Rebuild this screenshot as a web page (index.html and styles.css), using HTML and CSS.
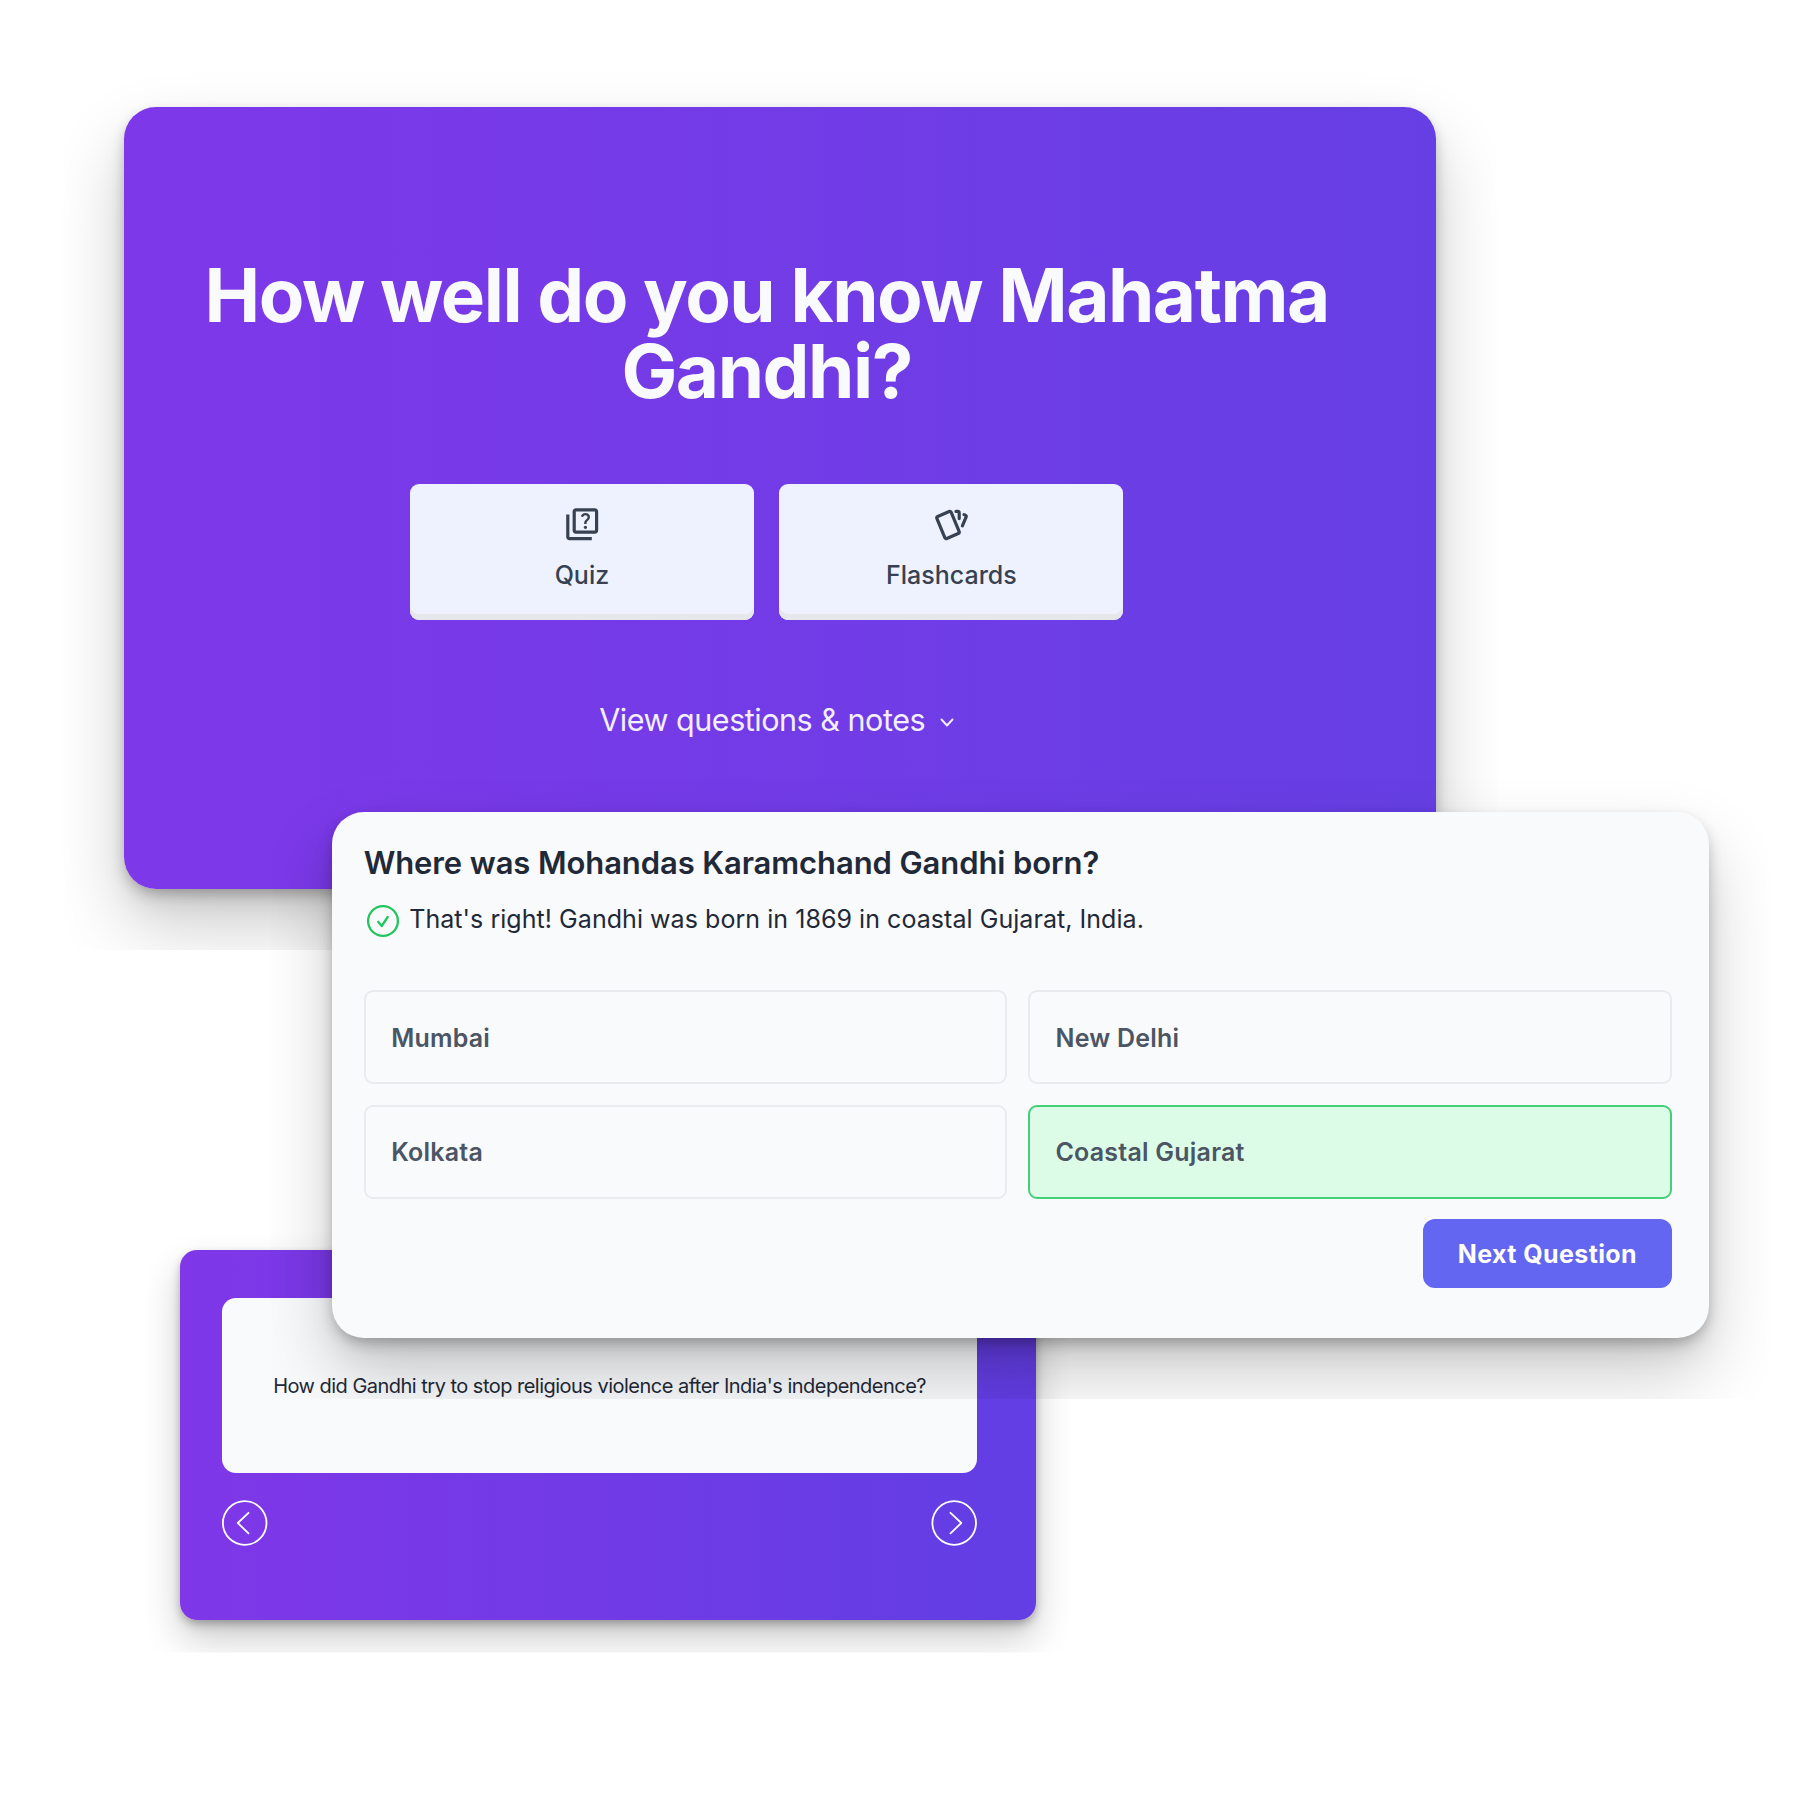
FILE: index.html
```html
<!DOCTYPE html>
<html lang="en">
<head>
<meta charset="utf-8">
<title>Mahatma Gandhi quiz</title>
<link rel="stylesheet" href="styles.css">
</head>
<body>
<main class="canvas">
  <section class="panel intro">
    <h1 class="intro-title">How well do you know Mahatma<br>Gandhi?</h1>
    <div class="modes">
      <button class="mode">
        <svg class="mode-icon" viewBox="0 0 24 24" fill="currentColor"><path d="M4 6H2v14c0 1.100.9 2 2 2h14v-2H4V6zm16-4H8c-1.100 0-2 .9-2 2v12c0 1.100.9 2 2 2h12c1.100 0 2-.9 2-2V4c0-1.100-.9-2-2-2zm0 14H8V4h12v12zm-6.490-5.840c.41-.73 1.180-1.160 1.630-1.800.48-.68.21-1.940-1.140-1.940-.88 0-1.320.67-1.500 1.230l-1.370-.57C11.510 5.960 12.520 5 13.990 5c1.230 0 2.080.56 2.510 1.260.37.6.58 1.730.01 2.570-.63.93-1.230 1.210-1.560 1.810-.13.24-.18.4-.18 1.180h-1.520c.01-.41-.06-1.080.26-1.660zm-.56 3.790c0-.59.47-1.040 1.050-1.040.59 0 1.040.45 1.040 1.040 0 .58-.44 1.050-1.040 1.050-.58 0-1.050-.47-1.050-1.050z"/></svg>
        <span class="mode-label">Quiz</span>
      </button>
      <button class="mode">
        <svg class="mode-icon" viewBox="0 0 24 24" fill="none" stroke="currentColor" stroke-width="2" stroke-linecap="round" stroke-linejoin="round"><path d="M3.604 7.197l7.138-3.109a.96.96 0 0 1 1.270.527l4.924 11.902a1 1 0 0 1-.514 1.304l-7.137 3.109a.96.96 0 0 1-1.271-.527l-4.924-11.903a1 1 0 0 1 .514-1.304z"/><path d="M15 4h1a1 1 0 0 1 1 1v3.500"/><path d="M20 6c.264.112.52.217.768.315a1 1 0 0 1 .53 1.311l-2.298 5.374"/></svg>
        <span class="mode-label">Flashcards</span>
      </button>
    </div>
    <div class="view-notes">
      <span>View questions &amp; notes</span>
      <svg class="chevron" viewBox="0 0 14 10" fill="none" stroke="currentColor" stroke-width="1.900" stroke-linecap="round" stroke-linejoin="round"><path d="M1.500 1.500 7 7.500l5.500-6"/></svg>
    </div>
  </section>

  <section class="panel flashcard">
    <div class="flash-face"><p class="flash-text">How did Gandhi try to stop religious violence after India's independence?</p></div>
    <div class="flash-nav">
      <svg class="nav-icon" viewBox="0 0 46 46" fill="none" stroke="currentColor" stroke-width="1.800" stroke-linecap="round" stroke-linejoin="round"><circle cx="22.700" cy="23" r="21.800"/><path d="M26.500 12.800 15.800 23l10.700 10.300"/></svg>
      <svg class="nav-icon" viewBox="0 0 46 46" fill="none" stroke="currentColor" stroke-width="1.800" stroke-linecap="round" stroke-linejoin="round"><circle cx="23.200" cy="23" r="21.800"/><path d="M19.500 12.800 30.300 23 19.500 33.300"/></svg>
    </div>
  </section>

  <section class="panel question">
    <h2 class="question-title">Where was Mohandas Karamchand Gandhi born?</h2>
    <div class="feedback">
      <svg class="check" viewBox="0 0 34 34" fill="none" stroke="currentColor" stroke-width="2.300" stroke-linecap="round" stroke-linejoin="round"><circle cx="17" cy="17" r="14.900"/><path d="m12.200 17.800 3.500 4.200 6-9"/></svg>
      <span class="feedback-text">That's right! Gandhi was born in 1869 in coastal Gujarat, India.</span>
    </div>
    <div class="options">
      <div class="option">Mumbai</div>
      <div class="option">New Delhi</div>
      <div class="option">Kolkata</div>
      <div class="option correct">Coastal Gujarat</div>
    </div>
    <button class="next">Next Question</button>
  </section>
</main>
</body>
</html>
```

FILE: styles.css
```css
* { box-sizing: border-box; }
body { margin: 0; background: #fff; font-family: Inter, "Liberation Sans", sans-serif; }
h1, h2, p { margin: 0; }
button { border: 0; font-family: inherit; }
svg { display: block; flex: none; }

.canvas { position: relative; width: 1800px; height: 1800px; overflow: hidden; }

/* Overlapping panels; each shadow is cut off at a fixed margin */
.panel {
  position: absolute;
  border-radius: 32px;
  box-shadow: 0 6px 14px -2px rgba(0, 0, 0, .25), 0 36px 72px rgba(0, 0, 0, .2), 0 16px 30px -6px rgba(0, 0, 0, .1);
  clip-path: inset(-61px);
}

.intro {
  left: 124px; top: 106.500px; width: 1312.300px; height: 782.500px;
  padding: 150.200px 27px 0 0;
  display: flex; flex-direction: column; align-items: center;
  background: linear-gradient(90deg, #7e38e9, #663fe4);
  color: #f9fafb;
}
.intro-title {
  font-size: 74.500px; line-height: 76.500px; font-weight: 700;
  letter-spacing: -1.480px; text-align: center; white-space: nowrap;
}
.modes { display: flex; gap: 25.500px; margin-top: 74.500px; }
.mode {
  width: 344px; height: 135.500px; padding: 20.500px 0 0;
  display: flex; flex-direction: column; align-items: center; gap: 14px;
  border-radius: 9px; background: #eef2ff; color: #374151;
  box-shadow: inset 0 -6px 0 #e5e7eb;
}
.mode-icon { width: 38.400px; height: 38.400px; }
.mode-label { font-size: 25px; line-height: 36px; font-weight: 550; }
.view-notes {
  display: flex; align-items: center; gap: 15px;
  margin-top: 80px; padding-left: 20px;
  font-size: 30.500px; line-height: 40px; letter-spacing: -.47px; color: #f3efff;
}
.chevron { width: 14px; height: 10px; margin-top: 6px; }

.question {
  left: 331.700px; top: 811.500px; width: 1377px; height: 526.500px;
  padding: 31px 37px 0 32px;
  display: flex; flex-direction: column;
  background: #f9fafc; color: #1f2937;
}
.question-title { font-size: 31px; line-height: 40px; font-weight: 600; letter-spacing: -.1px; white-space: nowrap; }
.feedback { display: flex; align-items: center; gap: 9.500px; margin-top: 18px; padding-left: 2px; height: 36px; }
.check { width: 34px; height: 34px; margin-top: 4px; color: #22c55e; }
.feedback-text { font-size: 25px; line-height: 36px; letter-spacing: .05px; white-space: nowrap; }
.options { display: grid; grid-template-columns: 1fr 1fr; gap: 20.500px; margin-top: 53.500px; }
.option {
  height: 94px; padding: 1px 25.500px 0; display: flex; align-items: center;
  border: 2px solid #e9ebee; border-radius: 9px;
  font-size: 25px; font-weight: 600; letter-spacing: .22px; color: #4b5563;
}
.correct { background: #dcfce7; border-color: #45cf79; }
.next {
  align-self: flex-end; width: 248.500px; height: 69px; margin-top: 20px; padding: 1px 0 0;
  border-radius: 12px; background: #6366f1; color: #fff;
  font-size: 25px; font-weight: 700; letter-spacing: .4px;
}

.flashcard {
  left: 180.300px; top: 1249.500px; width: 855.900px; height: 370px;
  padding: 48.500px 59px 0 41.700px; border-radius: 17px;
  display: flex; flex-direction: column; gap: 27px;
  background: linear-gradient(90deg, #7f37e8, #623ee4);
  box-shadow: 0 4px 8px -1px rgba(0, 0, 0, .25), 0 19px 38px rgba(0, 0, 0, .2), 0 8px 16px -3px rgba(0, 0, 0, .1);
  clip-path: inset(-33px);
  color: #fff;
}
.flash-face {
  height: 175px; display: flex; align-items: center; justify-content: center;
  border-radius: 14px; background: #f9fafc; color: #1f2937;
}
.flash-text { font-size: 20px; line-height: 28px; letter-spacing: -.52px; white-space: nowrap; }
.flash-nav { display: flex; justify-content: space-between; }
.nav-icon { width: 46px; height: 46px; }
```
